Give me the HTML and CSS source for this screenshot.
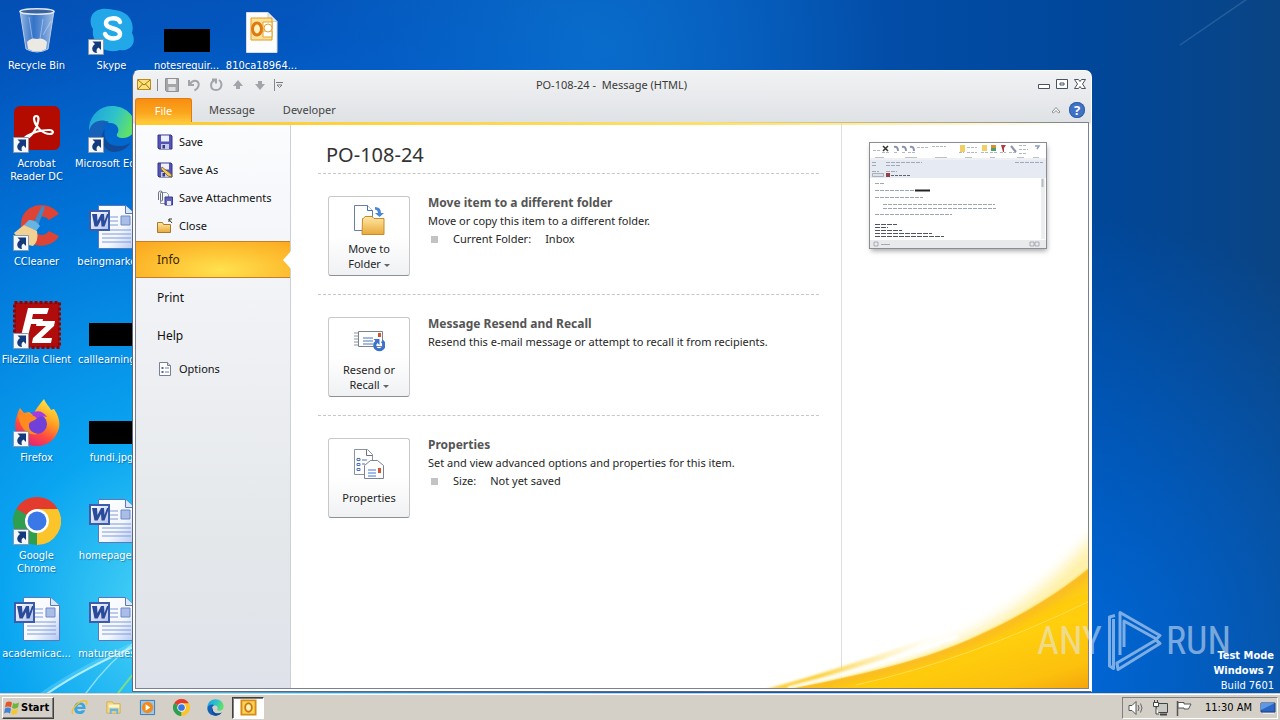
FILE: index.html
```html
<!DOCTYPE html>
<html lang="en">
<head>
<meta charset="utf-8">
<title>PO-108-24 - Message (HTML)</title>
<link rel="stylesheet" href="styles.css">
</head>
<body>
<svg class="defs" aria-hidden="true">
  <defs>
    <linearGradient id="gDoc" x1="0" y1="0" x2="1" y2="1"><stop offset="0" stop-color="#fff"/><stop offset=".6" stop-color="#f4f7fe"/><stop offset="1" stop-color="#b4c6f0"/></linearGradient>
    <linearGradient id="gW" x1="0" y1="0" x2="1" y2="1"><stop offset="0" stop-color="#fff"/><stop offset="1" stop-color="#b3c0ea"/></linearGradient>
    <linearGradient id="gFolder" x1="0" y1="0" x2="0" y2="1"><stop offset="0" stop-color="#ffe9a6"/><stop offset="1" stop-color="#e9a83a"/></linearGradient>
    <linearGradient id="gEdge" x1="0" y1="0" x2="1" y2=".3"><stop offset="0" stop-color="#1c9fe0"/><stop offset=".6" stop-color="#2fc3c9"/><stop offset="1" stop-color="#5fe06a"/></linearGradient>
    <linearGradient id="gFox" x1=".8" y1="0" x2=".3" y2="1"><stop offset="0" stop-color="#fff04a"/><stop offset=".4" stop-color="#ffa021"/><stop offset=".7" stop-color="#ff4a40"/><stop offset="1" stop-color="#e2207c"/></linearGradient>
    <linearGradient id="gBin" x1="0" y1="0" x2="1" y2="0"><stop offset="0" stop-color="#b9cdea" stop-opacity=".85"/><stop offset=".4" stop-color="#5d8fd4" stop-opacity=".55"/><stop offset="1" stop-color="#cfdcf0" stop-opacity=".8"/></linearGradient>
    <symbol id="shortcut" viewBox="0 0 16 16"><path d="M.5.5h15v15H.5z" fill="#f4f7fb" stroke="#8c99ad"/><path d="M4.500 2.500H13v8.500l-2.500-2.500C8.500 9.500 8 11.500 9 14 4.500 14 2 9 7 5z" fill="#153a7c"/></symbol>
    <symbol id="word" viewBox="0 0 48 48">
      <path d="M10.500 2.500h27l9 8v35h-36z" fill="url(#gDoc)" stroke="#5a79b8"/>
      <path d="M37.500 2.500v8h9" fill="#dbe6fb" stroke="#5a79b8"/>
      <path d="M22 14h8M22 18h8M22 22h8M14 27h29M14 31h29M14 35h29M14 39h29" stroke="#7d9bd8" stroke-width="1"/>
      <path d="M33 13h9v9h-9z" fill="#a9bde6" stroke="#6c8acb"/>
      <path d="M2 8h19v19H2z" fill="url(#gW)" stroke="#3b5dab" stroke-width="2"/>
      <path d="M4 11h5l.5 7L13 11h3l.5 7L19 11h2L16.500 23.500h-3L13 17l-3.300 6.500H6.500z" fill="#2a4b9c"/>
    </symbol>
    <symbol id="chrome" viewBox="0 0 48 48">
      <path d="M24 24 3.200 12A24 24 0 0 1 44.800 12z" fill="#e33b2e"/>
      <path d="M24 24 3.200 12A24 24 0 0 0 24 48l10.400-18z" fill="#2f9e4f"/>
      <path d="M24 24 24 48A24 24 0 0 0 44.800 12H24z" fill="#fcc42b"/>
      <path d="M24 24 24 48l10.400-18z" fill="#fcc42b"/>
      <circle cx="24" cy="24" r="12" fill="#fff"/><circle cx="24" cy="24" r="9.500" fill="#3b78e7"/>
    </symbol>
    <symbol id="edge" viewBox="0 0 48 48">
      <path d="M1 22C3 9 12 1 24 1c13 0 23 9 23 20 0 8-6 12-12 12-5 0-7-2-6-4 3-4 1-10-6-11C12 16 4 20 1 27z" fill="url(#gEdge)"/>
      <path d="M1 26c2-9 11-13 20-9-6 3-8 8-6 14 3 9 14 12 25 8-5 6-11 8-17 8C10 47 1 38 1 26z" fill="#1560b8"/>
      <path d="M17 24c-3 12 6 18 16 17 4 0 8-2 10-4-4 7-11 10-18 10-10-2-15-14-8-23z" fill="#114a98"/>
    </symbol>
    <symbol id="floppy" viewBox="0 0 16 16"><path d="M1 1h13l1 1v13H2l-1-1z" fill="#5454b4" stroke="#34348a"/><path d="M4 1.500h8v6H4z" fill="#eef0fb"/><path d="M4 10h8v5H4z" fill="#c5c9e8"/><path d="M5.500 11h2.500v3.500H5.500z" fill="#3a3a84"/></symbol>
  </defs>
</svg>

<main class="desktop">
  <svg class="rays" viewBox="0 0 1280 693" preserveAspectRatio="none" aria-hidden="true">
    <path d="M40 696Q80 668 140 642" stroke="#7fe3ff" stroke-width="5" fill="none" opacity=".35"/>
    <path d="M44 696Q80 670 140 644" stroke="#c8f6ff" stroke-width="2" fill="none" opacity=".8"/>
    <path d="M84 696Q106 664 140 638" stroke="#b4f0ff" stroke-width="1.500" fill="none" opacity=".7"/>
    <path d="M118 693l16-20" stroke="#8fe86a" stroke-width="2" opacity=".8"/>
    <path d="M1180 45l70-48" stroke="#5b8dc0" stroke-width="1.500" opacity=".35"/>
  </svg>

  <div class="icons">
    <div class="icon-col">
      <div class="icon"><div class="pic"><svg viewBox="0 0 48 48"><path d="M7 4l6 38q11 6 22 0l6-38z" fill="url(#gBin)" stroke="#b8cbe6"/><ellipse cx="24" cy="4.500" rx="17" ry="2.800" fill="#3d639c" stroke="#dfe7f2" stroke-width="1.500"/><path d="M14 35q4-5 10-3 6-2 10 3l-1 7q-9 5-18 0z" fill="#ece9e2"/><path d="M16 10l4 26M30 12l-3 20M38 14l-8 14" stroke="#d7e5f8" opacity=".5"/></svg></div><span>Recycle Bin</span></div>
      <div class="icon"><div class="pic"><svg viewBox="0 0 48 48"><rect x="1" y="1" width="46" height="44" rx="6" fill="#b30b00"/><path d="M12 34c6-2 12-9 13.500-20 0-4-4.500-4-4.500 0 1 8 9 15 16 15 4 0 4-4-1-4-8 0-17 3-22 6-4 3-4 5-2 3z" fill="none" stroke="#fff" stroke-width="2.200"/></svg><svg class="link"><use href="#shortcut"/></svg></div><span>Acrobat Reader DC</span></div>
      <div class="icon"><div class="pic"><svg viewBox="0 0 48 48"><path d="M46 11C36-3 14 0 9 15c-5 17 9 31 24 27 6-1 11-5 13-9l-10-5c-5 7-15 4-16-4-1-10 10-14 16-7z" fill="#dd4436"/><path d="M29 3l3 1-7 19-5-2z" fill="#3d8bc8"/><path d="M16 17q6-1 11 6l-4 5-12-6z" fill="#65b4e4"/><path d="M11 22l13 6q2 10-4 15-10-1-19-13z" fill="#f2d292"/></svg><svg class="link"><use href="#shortcut"/></svg></div><span>CCleaner</span></div>
      <div class="icon"><div class="pic"><svg viewBox="0 0 48 48"><rect x="1.500" y="1.500" width="45" height="45" fill="#b00c0c" stroke="#8c0404" stroke-width="3" stroke-dasharray="3 2"/><path d="M15 7h21l-2 6H20l-1 5h11l-1 5H18l-3 12H8z" fill="#fff"/><path d="M24 20h18l-1 5-13 12h11l-1 5H19l1-5 13-12H23z" fill="#fff"/></svg><svg class="link"><use href="#shortcut"/></svg></div><span>FileZilla Client</span></div>
      <div class="icon"><div class="pic"><svg viewBox="0 0 48 48"><path d="M7 9l4 5 5-1 4 3C24 8 27 5 31 0c2 5 5 7 7 11l3-1c5 7 6 14 5 19-3 11-11 18-22 18C10 47-1 35 3 20c1-4 2-8 4-11z" fill="url(#gFox)"/><circle cx="24" cy="25" r="10" fill="#7140d8"/><path d="M5 16c8-3 16 0 19 3-2 3-7 3-8 6-1 7 5 9 9 10-12 3-19-9-20-19z" fill="#ff8a20"/><path d="M18 14q10-5 16 4-6-2-10 1z" fill="#a33be0"/></svg><svg class="link"><use href="#shortcut"/></svg></div><span>Firefox</span></div>
      <div class="icon"><div class="pic"><svg><use href="#chrome"/></svg><svg class="link"><use href="#shortcut"/></svg></div><span>Google Chrome</span></div>
      <div class="icon"><div class="pic"><svg><use href="#word"/></svg></div><span>academicac...</span></div>
    </div>
    <div class="icon-col">
      <div class="icon"><div class="pic"><svg viewBox="0 0 48 48"><path d="M4 8C10-1 22 2 27 3c13 1 20 12 17 23 5 9-1 19-12 17C17 48 3 37 5 22 2 18 2 12 4 8z" fill="#22a8e8"/><path d="M32 15c-2-5-14-5-14 1 0 7 14 4 14 11 0 6-12 6-15 0" stroke="#fff" stroke-width="4.500" fill="none" stroke-linecap="round"/></svg><svg class="link"><use href="#shortcut"/></svg></div><span>Skype</span></div>
      <div class="icon"><div class="pic"><svg><use href="#edge"/></svg><svg class="link"><use href="#shortcut"/></svg></div><span class="long">Microsoft Edge</span></div>
      <div class="icon"><div class="pic"><svg><use href="#word"/></svg></div><span class="long">beingmarke...</span></div>
      <div class="icon"><div class="pic"><div class="black"></div></div><span class="long">calllearning...</span></div>
      <div class="icon"><div class="pic"><div class="black"></div></div><span>fundi.jpg</span></div>
      <div class="icon"><div class="pic"><svg><use href="#word"/></svg></div><span class="long">homepager...</span></div>
      <div class="icon"><div class="pic"><svg><use href="#word"/></svg></div><span class="long">maturetues...</span></div>
    </div>
    <div class="icon-col">
      <div class="icon"><div class="pic"><div class="black"></div></div><span>notesrequir...</span></div>
    </div>
    <div class="icon-col">
      <div class="icon"><div class="pic"><svg viewBox="0 0 48 48"><path d="M8.500 5.500H30l9 9v31H8.500z" fill="#fdfdfd" stroke="#d8dbe0"/><path d="M30 5.500v9h9" fill="#e6e9ee" stroke="#c9ced6"/><path d="M13 11h21v22H13z" fill="#fce39a" stroke="#e59a1e"/><path d="M25 15h9v7h-9zM25 24h9v6h-9z" fill="#fff" stroke="#e7a22c"/><circle cx="30" cy="21" r="4" fill="#fff" stroke="#e7a22c"/><ellipse cx="19" cy="22" rx="4.500" ry="6" fill="#fff3c4" stroke="#e07a10" stroke-width="3"/></svg></div><span>810ca18964...</span></div>
    </div>
  </div>

  <section class="window" aria-label="PO-108-24 - Message (HTML)">
    <header class="titlebar">
      <div class="quick">
        <svg viewBox="0 0 14 11" class="env"><path d="M.5.500h13v10H.5z" fill="#ffe17a" stroke="#b98a1c"/><path d="M1 1l6 5 6-5M1 10l4.500-5M13 10L8.500 5" fill="none" stroke="#9c7414"/></svg>
        <i class="bar"></i>
        <button aria-label="Save"><svg viewBox="0 0 16 16"><path d="M1.500 1.500h13v13h-12l-1-1z" fill="#a4a6aa" stroke="#8e9095"/><path d="M4 2h8v5H4z" fill="#eceef0"/><path d="M4.500 10h7v4h-7z" fill="#dcdee1"/></svg></button>
        <button aria-label="Undo"><svg viewBox="0 0 16 16"><path d="M3 3v5h5M3.500 7.500C8 1 14 4 12.500 9c-.5 2-2 3.500-4 4.500" fill="none" stroke="#a2a4a9" stroke-width="2"/></svg></button>
        <button aria-label="Redo"><svg viewBox="0 0 16 16"><path d="M4 2.500h4v4M7.500 3C1 5 2 13 8 13s7-7 3-10" fill="none" stroke="#a2a4a9" stroke-width="2"/></svg></button>
        <button aria-label="Previous item"><svg viewBox="0 0 16 16"><path d="M8 3l5 6h-3v3H6V9H3z" fill="#a2a4a9"/></svg></button>
        <button aria-label="Next item"><svg viewBox="0 0 16 16"><path d="M8 13L3 7h3V4h4v3h3z" fill="#a2a4a9"/></svg></button>
        <i class="bar"></i>
        <button class="slim" aria-label="Customize"><svg viewBox="0 0 8 8"><path d="M0 1.500h7M1 4h5L3.500 6.500z" fill="#fff" stroke="#777a80"/></svg></button>
      </div>
      <h1>PO-108-24 - &nbsp;Message (HTML)</h1>
      <div class="controls">
        <button aria-label="Minimize"><svg viewBox="0 0 12 12"><path d="M.5 5.500h11v4H.5z" fill="#fff" stroke="#4a5260"/></svg></button>
        <button aria-label="Restore"><svg viewBox="0 0 12 12"><path d="M.5.500h11v9H.5z" fill="#fff" stroke="#4a5260"/><path d="M4 4h4v2H4z" fill="#fff" stroke="#4a5260"/></svg></button>
        <button aria-label="Close"><svg viewBox="0 0 12 12"><path d="M.5.500h4L6 2.500l1.500-2h4L8.500 5l3 4.500h-4L6 7.500l-1.500 2h-4l3-4.500z" fill="#fff" stroke="#4a5260"/></svg></button>
      </div>
    </header>
    <nav class="tabs">
      <button class="tab file">File</button>
      <button class="tab">Message</button>
      <button class="tab">Developer</button>
      <div class="tab-right">
        <button aria-label="Collapse ribbon"><svg viewBox="0 0 10 8" width="10" height="8"><path d="M1 6l4-4.500L9 6 7.500 7 5 4.500 2.500 7z" fill="#fff" stroke="#8b8f96"/></svg></button>
        <button class="help" aria-label="Help">?</button>
      </div>
    </nav>
    <div class="backstage">
      <nav class="side">
        <button class="cmd"><svg><use href="#floppy"/></svg>Save</button>
        <button class="cmd"><svg viewBox="0 0 16 16"><use href="#floppy"/><path d="M5 5l9 7 1 3-4-1L4 7z" fill="#f0c95a" stroke="#7c6520" stroke-width=".8"/></svg>Save As</button>
        <button class="cmd"><svg viewBox="0 0 16 16"><path d="M3.500 2.500h6l2 2v9h-8z" fill="#f4f6fa" stroke="#8d97a8"/><path d="M1.500 10V3a2 2 0 0 1 4 0v7a1 1 0 0 1-2 0V4" fill="none" stroke="#6a7384"/><path d="M8 7h7.500v8H8z" fill="#6363bd" stroke="#3c3c90"/><path d="M10 11h4v4h-4z" fill="#e8eaf8"/></svg>Save Attachments</button>
        <button class="cmd"><svg viewBox="0 0 16 16"><path d="M.5 4.500h5l1 2h7v8H.5z" fill="url(#gFolder)" stroke="#a87b28"/><path d="M15 5l-3-3.500M12 4V1h3" fill="none" stroke="#333"/></svg>Close</button>
        <button class="page active">Info</button>
        <button class="page">Print</button>
        <button class="page">Help</button>
        <button class="cmd"><svg viewBox="0 0 16 16"><path d="M2.500 1.500h8l3 3v10h-11z" fill="#fff" stroke="#76808e"/><path d="M10.500 1.500v3h3" fill="#d8dee8" stroke="#76808e"/><path d="M4.500 6h2v2h-2zM4.500 10h2v2h-2z" fill="#4e6f9e"/><path d="M8 7h4M8 11h4" stroke="#6c7f9c"/></svg>Options</button>
      </nav>
      <div class="info">
        <h2>PO-108-24</h2>
        <section class="group">
          <button class="big"><svg viewBox="0 0 32 32"><path d="M1.500 1.500h13l5 5v20h-18z" fill="#fff" stroke="#6c7fa8"/><path d="M14.500 1.500v5h5" fill="#fff" stroke="#3f6fc0"/><path d="M22 3q6 0 6 6h3l-4.500 4L22 9h3q0-3-3-3.500z" fill="#4a86d8"/><path d="M9.500 14.500h1l1.500-2h7l2 2h10V30.500h-22z" fill="url(#gFolder)" stroke="#c98a2a"/></svg><span>Move to<br>Folder <i class="caret"></i></span></button>
          <div class="desc"><h3>Move item to a different folder</h3><p>Move or copy this item to a different folder.</p><ul><li><span>Current Folder:</span><span>Inbox</span></li></ul></div>
        </section>
        <section class="group">
          <button class="big"><svg viewBox="0 0 32 32"><path d="M5.500 6.500h24v15h-24z" fill="#fff" stroke="#7a8392"/><path d="M1 8h4M1 11h4M1 14h4M1 17h4M1 20h4" stroke="#8a93a2"/><path d="M25 8h3v4h-3z" fill="#d5532f"/><path d="M10 13h10M10 16h10M10 19h10" stroke="#4f73b8"/><path d="M29 16q4 3.500 1 7-4 3.500-7.500 0-2-4 1.500-6.500" fill="none" stroke="#3a72cc" stroke-width="3"/><path d="M20.500 14h6v6z" fill="#3a72cc"/></svg><span>Resend or<br>Recall <i class="caret"></i></span></button>
          <div class="desc"><h3>Message Resend and Recall</h3><p>Resend this e-mail message or attempt to recall it from recipients.</p></div>
        </section>
        <section class="group">
          <button class="big"><svg viewBox="0 0 32 32"><path d="M1.500 1.500h13l5 5v20h-18z" fill="#fff" stroke="#8a93a2"/><path d="M13.500 1.500v6h6" fill="#fff" stroke="#6a7382"/><path d="M4 10.500h3v2H4zM4 15.500h3v2H4zM4 20.500h3v2H4z" fill="none" stroke="#4f73b8"/><path d="M9 12h5M9 16h3" stroke="#4f73b8"/><path d="M11.500 17.500l6-5h7l6 5v13h-19z" fill="#fff" stroke="#7a8392"/><path d="M25 20h3v5h-3z" fill="#d5532f"/><path d="M15 22h8M15 25h8M15 28h8" stroke="#3f78d0"/></svg><span>Properties</span></button>
          <div class="desc"><h3>Properties</h3><p>Set and view advanced options and properties for this item.</p><ul><li><span>Size:</span><span>Not yet saved</span></li></ul></div>
        </section>
      </div>
      <aside class="preview">
        <svg class="thumb" viewBox="0 0 176 105" role="img" aria-label="Message preview">
          <path d="M0 0h176v105H0z" fill="#fff"/>
          <path d="M0 15h176v2H0z" fill="#eef0f3"/><path d="M0 17h176v18H0z" fill="#e6ebf3"/><path d="M0 97h176v8H0z" fill="#e9eaec"/>
          <path d="M171 35h4v61h-4z" fill="#eceef0"/><path d="M171.500 36h2v8h-2z" fill="#b7bbc2"/>
          <g stroke-width="1.500" fill="none"><path d="M13 3l5 5m0-5l-5 5" stroke="#333"/><path d="M24 4q4-1 4 4M32 4q4-1 4 4M40 4q4-1 4 4M141 3l5 6" stroke="#8a93b0" stroke-width="2"/><path d="M165 3h4l-2 3" stroke="#8b9fc0"/></g>
          <path d="M90 2h5v7h-5zM112 2h5v6h-5z" fill="#f2cf62"/><path d="M121 2h5v3h-5z" fill="#e08b2e"/><path d="M121 5h5v3h-5z" fill="#4aa06a"/><path d="M131 2h5l-2 3v4h-1z" fill="#b33d3d"/>
          <path d="M47 4.500h11M97 4.500h10M97 9.500h10M149 2.500h7M149 6.500h9M149 10.500h8M62 3.500h14M12 9.500h7M24 9.500h4M32 9.500h4M38 9.500h7M89 9.500h5M111 9.500h7M120 9.500h8M130 9.500h6M139 9.500h8M3 7.500h7" stroke="#a1a8b4" stroke-dasharray="3 1" opacity=".8"/>
          <path d="M5 14.500h9M35 14.500h12M65 14.500h12M95 14.500h7M120 14.500h5M147 14.500h7M163 14.500h6" stroke="#bcc2ca"/>
          <path d="M2 19.500h5M2 22.500h4M2 28.500h7M16 19.500h36M16 22.500h15M16 28.500h11M145 19.500h28" stroke="#8993a4" stroke-dasharray="4 1" opacity=".75"/>
          <path d="M2.500 30.500h11v3h-11z" fill="#dde1e8" stroke="#9199a5" stroke-width=".7"/><path d="M16 30h4v4h-4z" fill="#983e47"/><path d="M21 32.500h20" stroke="#5f6773" stroke-dasharray="3 1"/>
          <g stroke="#8d97a9" stroke-dasharray="4 1" opacity=".85"><path d="M5 40.500h10M5 47.500h40M5 54.500h48M13 61.500h112M13 65.500h113M5 71.500h77"/></g>
          <path d="M45 47.500h15" stroke="#222" stroke-width="2"/>
          <g stroke="#4d5562" stroke-dasharray="5 1"><path d="M5 81.500h22M5 84.500h13M5 87.500h27M5 90.500h57M5 93.500h69"/></g>
          <path d="M4 99h4v4H4zM160 99h4v4h-4zM165 99h4v4h-4z" fill="none" stroke="#9aa0a8" stroke-width=".8"/><path d="M11 101.500h9" stroke="#a5aab2"/>
        </svg>
      </aside>
      <svg class="swoosh" viewBox="0 0 330 160" aria-hidden="true">
        <defs>
          <linearGradient id="sw" x1=".3" y1="0" x2="1" y2="1"><stop offset="0" stop-color="#fbc926"/><stop offset=".6" stop-color="#ffce0c"/><stop offset=".85" stop-color="#fcc010"/><stop offset="1" stop-color="#f5a20c"/></linearGradient>
          <filter id="soft" x="-20%" y="-20%" width="140%" height="140%"><feGaussianBlur stdDeviation="7"/></filter>
          <filter id="band" x="-10%" y="-20%" width="120%" height="140%"><feGaussianBlur stdDeviation="4"/></filter>
          <filter id="hair" x="-10%" y="-20%" width="120%" height="140%"><feGaussianBlur stdDeviation="1"/></filter>
          <linearGradient id="wing" x1="0" y1="0" x2="1" y2="0"><stop offset=".3" stop-color="#fbd03c"/><stop offset="1" stop-color="#fff0a8" stop-opacity="0"/></linearGradient>
          <clipPath id="body"><path d="M32 161C115 145 170 130 215 110 262 89 300 66 334 38V162H32z"/></clipPath>
        </defs>
        <path d="M70 150C200 128 280 76 340 2V80Q230 140 70 158z" fill="#ffee98" opacity=".85" filter="url(#soft)"/>
        <path d="M8 161Q80 142 180 106 130 138 30 161z" fill="url(#wing)" filter="url(#hair)"/>
        <path d="M30 161Q120 138 200 108" stroke="#fff" stroke-width="5" fill="none" opacity=".9" filter="url(#hair)"/>
        <path d="M32 161C115 145 170 130 215 110 262 89 300 66 334 38V162H32z" fill="url(#sw)" filter="url(#hair)"/>
        <g clip-path="url(#body)">
          <path d="M32 161C115 145 170 130 215 110 262 89 300 66 340 34" fill="none" stroke="#f8b52a" stroke-width="14" opacity=".75" filter="url(#band)"/>
          <path d="M98 157Q210 132 334 72" stroke="#ffe566" fill="none" opacity=".7"/>
        </g>
      </svg>
    </div>
  </section>

  <div class="build"><b>Test Mode</b><b>Windows 7</b><span>Build 7601</span></div>
  <div class="mark"><span>ANY</span><svg viewBox="0 0 56 64"><path d="M9 6.500L3.500 8v49l4 2.500V10M14 46V3.500l40 23-3.500 3.500L18 12v26M12 60.500l42-26-4-3.500L11 54zM12 60.500l-1-6" fill="none" stroke="currentColor" stroke-width="3" stroke-linejoin="round"/></svg><span>RUN</span></div>
</main>

<footer class="taskbar">
  <button class="start"><svg viewBox="0 0 16 16"><path d="M2 2.500q3-2 6 0L7 7.500q-3-2-6 0z" fill="#e2562b"/><path d="M9 3q3 1.500 6-.5l-1 5q-3 2-6 .5z" fill="#6fb43c"/><path d="M1 8.500q3-2 6 0l-1 5q-3-2-6 0z" fill="#3f82d8"/><path d="M8 9q3 1.500 6-.5l-1 5q-3 2-6 .5z" fill="#f6c634"/></svg>Start</button>
  <button class="app" aria-label="Internet Explorer"><svg viewBox="0 0 18 18"><path d="M15.500 10.500h-9q.3 2.500 2.800 2.500 1.500 0 2.200-1.200h3.500Q13.500 16 9.300 16q-6 0-6-6.300T9.500 3.500q6 0 6 7zM6.600 8.300h5.600Q12 6 9.500 6T6.600 8.300z" fill="#3aa6e2"/><path d="M2 16C-1 12 8 1 16 2q1.500 1 0 4" fill="none" stroke="#f0c22c" stroke-width="1.500"/></svg></button>
  <button class="app" aria-label="Explorer"><svg viewBox="0 0 18 18"><path d="M2 3h6l1 2h7v10H2z" fill="#f3da86" stroke="#d3ad4a"/><path d="M4 6h11v3H4z" fill="#fff6cd"/><path d="M5 10h9v6h-2v-3H7v3H5z" fill="#68b5e4"/></svg></button>
  <button class="app" aria-label="Media Player"><svg viewBox="0 0 18 18"><path d="M1.500 1.500h15v15h-15z" fill="#9cc8ea" stroke="#3c78b4"/><circle cx="9" cy="9" r="6" fill="#f08a1c"/><path d="M7 5.500l5 3.500-5 3.500z" fill="#fff"/></svg></button>
  <button class="app" aria-label="Chrome"><svg><use href="#chrome"/></svg></button>
  <button class="app" aria-label="Edge"><svg><use href="#edge"/></svg></button>
  <button class="app on" aria-label="Outlook"><svg viewBox="0 0 18 18"><path d="M1.500 1.500h15v15h-15z" fill="#f9d35c" stroke="#d88c14" stroke-width="2"/><ellipse cx="9" cy="9" rx="3.500" ry="4.500" fill="#fff2bd" stroke="#c97a0c" stroke-width="2"/></svg></button>
  <div class="tray">
    <svg viewBox="0 0 16 16"><path d="M1 5.500h3l4-4v13l-4-4H1z" fill="#fff" stroke="#555"/><path d="M10 5q2 3 0 6M12.500 3.500q3 4.500 0 9" fill="none" stroke="#666"/></svg>
    <svg viewBox="0 0 16 16"><path d="M4.500 3.500h11v9h-11z" fill="#c9c9c4" stroke="#444"/><path d="M8 14.500h7" stroke="#444" stroke-width="2"/><path d="M1.500 2.500h5v4h-5zM4 7v7h3M2.500 0v3M5.500 0v3" fill="#fff" stroke="#444"/></svg>
    <svg viewBox="0 0 16 16"><path d="M1.500 1v15" stroke="#555" stroke-width="1.500"/><path d="M2 2.500h6v1.500h7l-2.500 5H8V8H2z" fill="#fff" stroke="#555"/></svg>
    <time>11:30 AM</time>
    <svg viewBox="0 0 16 16"><path d="M1 3h14v9H1z" fill="#2b66c4" stroke="#1c3f80"/><path d="M1 3h14L1 10z" fill="#5d97e6"/><path d="M3 13.500h11" stroke="#eee"/></svg>
  </div>
</footer>
</body>
</html>
```

FILE: styles.css
```css
* { box-sizing: border-box; }
html, body { height: 100%; }
body {
  margin: 0;
  display: flex;
  flex-direction: column;
  overflow: hidden;
  font: 11px/14px "Noto Sans", "Open Sans", sans-serif;
  color: #262626;
}
button { font: inherit; color: inherit; background: none; border: 0; padding: 0; margin: 0; }
h1, h2, h3, p, ul { margin: 0; padding: 0; font-weight: normal; }
svg { display: block; flex: none; }
.defs { position: absolute; width: 0; height: 0; }

/* Desktop */
.desktop {
  flex: 1;
  min-height: 0;
  position: relative;
  overflow: hidden;
  background:
    radial-gradient(circle at 14% 88%, rgba(85, 225, 250, .95) 0, rgba(10, 170, 245, .95) 14%, rgba(0, 130, 232, .75) 32%, rgba(0, 100, 215, .4) 46%, transparent 58%),
    radial-gradient(circle at 46% 8%, rgba(10, 112, 205, .9), transparent 32%),
    radial-gradient(circle at 82% 95%, rgba(0, 108, 224, .9), transparent 36%),
    linear-gradient(90deg, #0448a8 0, #0554b8 50%, #00479a 85%, #0a4484 100%);
}
.rays { position: absolute; inset: 0; width: 100%; height: 100%; }
.icons {
  position: relative;
  display: flex;
  margin-left: -1px;
  padding-top: 7px;
  font: 11px/13px "DejaVu Sans Condensed", "DejaVu Sans", sans-serif;
  color: #fff;
}
.icon-col { width: 75px; }
.icon { height: 98px; display: flex; flex-direction: column; align-items: center; gap: 4px; text-align: center; text-shadow: 1px 1px 1px rgba(0, 30, 90, .4); }
.icon span { padding: 0 3px; }
.icon .long, .icon-col:nth-child(n+3) span, .icon:last-child span, .icon:nth-child(4) span { white-space: nowrap; padding: 0; }
.pic { position: relative; width: 48px; height: 48px; display: flex; align-items: center; justify-content: center; }
.pic svg { width: 48px; height: 48px; }
.pic .link { position: absolute; left: 0; bottom: 0; width: 16px; height: 16px; }
.black { flex: none; width: 46px; height: 23px; background: #000; margin-top: 18px; }

/* Message window */
.window {
  position: absolute;
  inset: 70px 188px 1px 132px;
  display: flex;
  flex-direction: column;
  padding: 0 2px 2px;
  border: 1px solid #5a6780;
  border-top-color: #fff;
  border-right-color: #fff;
  border-radius: 7px 7px 0 0;
  background: linear-gradient(#f1f2f4, #dfe2e5 52px, #fff 53px);
}
.titlebar { height: 27px; flex: none; display: flex; align-items: center; }
.quick, .controls { flex: 1; display: flex; align-items: center; gap: 6px; }
.quick { padding-left: 2px; }
.quick svg { width: 16px; height: 16px; }
.quick .env { width: 14px; height: 11px; }
.quick .slim svg { width: 8px; height: 8px; }
.quick .bar + .slim { margin-left: -5px; }
.bar { width: 1px; height: 12px; background: #85888e; }
.titlebar h1 { font-size: 11px; color: #3a3a3a; }
.controls { justify-content: flex-end; padding-right: 3px; }
.controls svg { width: 12px; height: 12px; }
.tabs { height: 24px; flex: none; display: flex; gap: 6px; color: #444; }
.tab { padding: 0 11px; }
.tab.file { width: 57px; color: #fff; border: 1px solid #e07c10; border-bottom: 0; border-radius: 3px 3px 0 0; background: linear-gradient(#f88d12, #fba61c 60%, #ffc63a); }
.tab-right { margin-left: auto; display: flex; align-items: center; gap: 8px; padding-right: 4px; }
.help { width: 16px; height: 16px; border-radius: 50%; background: #3f72c4; box-shadow: inset 0 0 0 1px #3260ac; color: #fff; font-weight: bold; font-size: 13px; }
.backstage {
  flex: 1;
  min-height: 0;
  position: relative;
  display: flex;
  border: 1px solid #7a8190;
  background: #fff;
}
.backstage::before { content: ""; position: absolute; left: 0; right: 0; top: -1px; height: 3px; background: linear-gradient(90deg, #ffc928, #fbdf6e 60%, rgba(255, 245, 190, 0)); }

/* Backstage navigation */
.side { width: 155px; padding-top: 5px; border-right: 1px solid #cdd0d5; background: linear-gradient(#fbfcfe, #f1f3f7 30%, #e4e7ea 75%, #dfe2ea); color: #111; }
.cmd { width: 100%; height: 28px; display: flex; align-items: center; gap: 6px; padding-left: 21px; }
.cmd svg { width: 16px; height: 16px; }
.page { display: block; width: 100%; height: 38px; padding-left: 21px; text-align: left; font-size: 12px; }
.page.active {
  position: relative;
  margin: 1px 0;
  height: 37px;
  border: solid #c77e28;
  border-width: 1px 0;
  color: #3c2505;
  background: radial-gradient(ellipse at 55% 80%, #ffe14e, #fdb92c 65%, #fba51f);
}
.page.active::after { content: ""; position: absolute; right: -1px; top: 9px; border: solid transparent; border-width: 9px 8px 9px 0; border-right-color: #fff; }

/* Info page */
.info { flex: 1; padding: 0 22px 0 27px; position: relative; z-index: 1; }
.info h2 { font-size: 20px; line-height: 24px; padding: 20px 0 6px 8px; color: #333; }
.group { height: 121px; display: flex; gap: 18px; padding: 20px 0 0 10px; border-top: 1px dashed #c4c7cb; }
.big { width: 82px; height: 80px; flex: none; margin-top: 2px; display: flex; flex-direction: column; align-items: center; justify-content: flex-end; gap: 5px; padding-bottom: 4px; line-height: 15px; border: 1px solid #c6c8cb; border-bottom-color: #8d9095; border-radius: 3px; background: linear-gradient(#fff 50%, #f0f1f3); }
.group:last-child .big { padding-bottom: 12px; gap: 10px; }
.big svg { width: 32px; height: 32px; }
.caret { display: inline-block; vertical-align: middle; border: solid transparent; border-width: 3px 3px 0; border-top-color: #666; }
.desc { line-height: 18px; }
.desc h3 { font-size: 12px; font-weight: bold; color: #555; }
.desc ul { list-style: none; }
.desc li { display: flex; align-items: center; gap: 14px; padding-left: 3px; }
.desc li::before { content: ""; width: 7px; height: 7px; margin-right: 1px; background: #c3c3c3; }
.preview { width: 247px; flex: none; padding: 20px 0 0 28px; border-left: 1px solid #dcdee2; }
.thumb { width: 176px; height: 105px; outline: 1px solid #8a8d92; box-shadow: 1px 3px 5px rgba(0, 0, 0, .35); }
.swoosh { position: absolute; right: 0; bottom: 0; width: 330px; height: 160px; }

/* Desktop overlays */
.build { position: absolute; right: 6px; bottom: 0; z-index: 2; display: flex; flex-direction: column; text-align: right; font: 11px/15px "DejaVu Sans Condensed", "DejaVu Sans", sans-serif; color: #fff; }
.mark { position: absolute; right: 49px; bottom: 20px; display: flex; align-items: center; gap: 4px; font: 38px/64px "Roboto Condensed", "Liberation Sans Narrow", "Liberation Sans", sans-serif; color: rgba(225, 235, 248, .55); }
.mark svg { width: 56px; height: 64px; }

/* Taskbar */
.taskbar { height: 27px; flex: none; display: flex; align-items: center; padding: 1px 2px 0; border-top: 1px solid #d4d0c8; background: #d4d0c8; box-shadow: inset 0 1px #fff; font: 11px/14px "DejaVu Sans Condensed", "DejaVu Sans", sans-serif; color: #000; }
.start { width: 52px; height: 22px; margin-right: 8px; display: flex; align-items: center; gap: 1px; padding-left: 1px; font-weight: bold; border: 1px solid; border-color: #fff #404040 #404040 #fff; box-shadow: inset -1px -1px #808080; }
.start svg { width: 16px; height: 16px; }
.app { width: 34px; height: 22px; display: flex; align-items: center; justify-content: center; }
.app svg { width: 17px; height: 17px; }
.app.on { width: 32px; background: #fff; border: 1px solid; border-color: #404040 #fff #fff #404040; box-shadow: inset 1px 1px #808080; }
.tray { margin-left: auto; height: 22px; display: flex; align-items: center; gap: 8px; padding: 0 1px 0 5px; border: 1px solid; border-color: #808080 #fff #fff #808080; }
.tray svg { width: 16px; height: 16px; }
.tray time { padding-left: 5px; }
```
